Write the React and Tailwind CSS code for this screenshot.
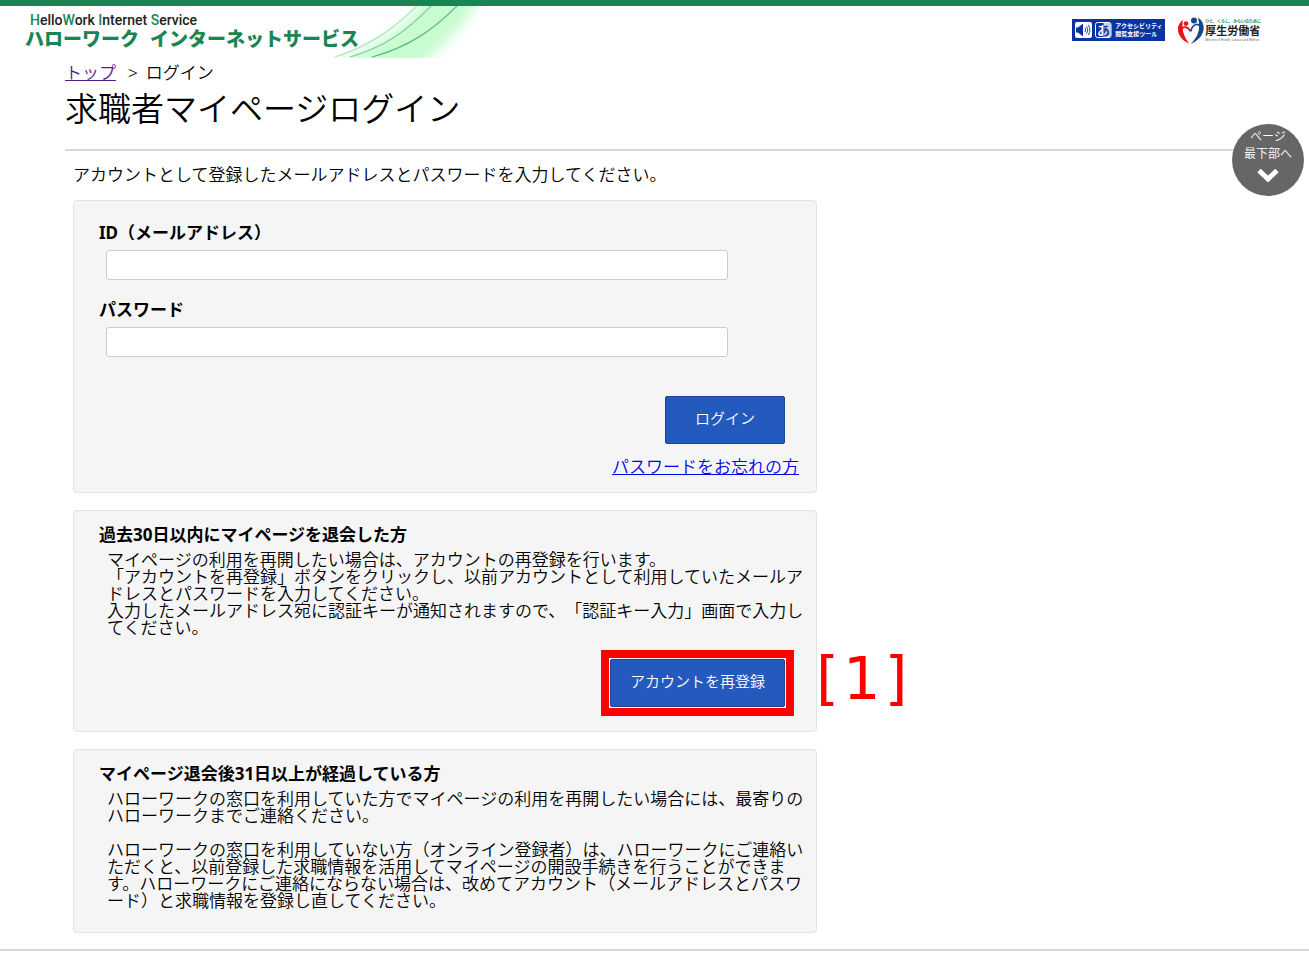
import React, { useState } from 'react';

const font = "font-['Noto_Sans','Noto_Sans_CJK_JP',sans-serif]";

function SiteLogo() {
  return (
    <a href="#" className="relative block h-[52px] w-[490px] pl-[25px] pt-[6px]">
      <svg className="absolute left-[325px] top-0" width="165" height="52" viewBox="0 0 165 52" aria-hidden="true">
        <defs>
          <filter id="soft" x="-20%" y="-20%" width="140%" height="140%">
            <feGaussianBlur stdDeviation="6" />
          </filter>
        </defs>
        <path d="M0 60 C40 48 78 24 104 -10 L158 -10 C136 22 116 44 94 60 Z" fill="#c8fbd0" filter="url(#soft)" />
        <g fill="none" strokeWidth="1.2">
          <path d="M10 51 C42 41 66 25 92 0" stroke="#b0e6c2" />
          <path d="M25 51 C60 41 82 25 107 -1" stroke="#7fcb9f" />
          <path d="M47 51 C84 41 108 24 133 -1" stroke="#5db98a" />
        </g>
      </svg>
      <div className="relative pl-[5px] text-[14px] leading-[16px] font-medium text-[#222] font-['Roboto','Noto_Sans_CJK_JP',sans-serif]">
        <span className="text-[#1a8553]">H</span>ello<span className="text-[#1a8553]">W</span>ork{' '}
        <span className="text-[#1a8553]">I</span>nternet <span className="text-[#1a8553]">S</span>ervice
      </div>
      <div className="relative flex gap-[11px] text-[19px] leading-[22px] font-black text-[#1a8553]">
        <span>ハローワーク</span>
        <span>インターネットサービス</span>
      </div>
    </a>
  );
}

function AccessibilityTool() {
  return (
    <a href="#" className="flex h-[22px] w-[93px] items-center gap-[3px] bg-[#0b33a0] pl-[3px] text-white">
      <svg width="37" height="18" viewBox="0 0 37 18" className="shrink-0" aria-hidden="true">
        <defs>
          <linearGradient id="half" gradientUnits="userSpaceOnUse" x1="28" y1="0" x2="29" y2="0">
            <stop offset="0" stopColor="#fff" />
            <stop offset="1" stopColor="#0b33a0" />
          </linearGradient>
        </defs>
        <rect x="0" y="1" width="17" height="16" rx="2" fill="#fff" />
        <path d="M1 6.5 H3 L8 2.5 V15.5 L3 11.5 H1 Z" fill="#0b33a0" />
        <g fill="none" stroke="#0b33a0" strokeWidth="0.9">
          <path d="M10 7 Q11.4 9 10 11" />
          <path d="M11.6 5.4 Q14 9 11.6 12.6" />
          <path d="M13.3 4 Q16.6 9 13.3 14" />
        </g>
        <rect x="20.5" y="1.5" width="15.5" height="15" rx="2" fill="#0b33a0" stroke="#fff" />
        <path d="M28.5 2 H34 Q36 2 36 4 V14 Q36 16 34 16 H28.5 Z" fill="#c9d3ee" />
        <text x="22" y="14" fontSize="13" fontWeight="700" fill="url(#half)">あ</text>
      </svg>
      <span className="text-[6px] leading-[8px] font-bold whitespace-nowrap">
        アクセシビリティ
        <br />
        閲覧支援ツール
      </span>
    </a>
  );
}

function MinistryLogo() {
  return (
    <a href="#" className="flex items-center gap-px">
      <svg width="26" height="28" viewBox="0 0 26 28" aria-hidden="true">
        <path d="M5 4 C-3 9 -2 22 11 27.4 C5.5 20 3.4 13 5 4 Z" fill="#e5161d" />
        <path d="M3.4 14 C5 9.4 10 10.6 12.4 15.4" fill="none" stroke="#e5161d" strokeWidth="1.7" />
        <circle cx="8" cy="7.6" r="2.4" fill="#e5161d" />
        <path d="M20 1.6 C29 7 28 22 12.4 28 C21 20 22.6 12 20 1.6 Z" fill="#17458f" />
        <path d="M22.6 11 C20 6.6 14.4 8 12.8 15.4" fill="none" stroke="#17458f" strokeWidth="1.7" />
        <circle cx="16" cy="4.4" r="3" fill="#17458f" />
      </svg>
      <span className="flex flex-col whitespace-nowrap">
        <span className="text-[4px] leading-[5px] font-bold text-[#1a8553]">ひと、くらし、みらいのために</span>
        <span className="text-[11px] leading-[14px] font-bold text-[#222]">厚生労働省</span>
        <span className="text-[3px] leading-[4px] font-normal text-[#666]">Ministry of Health, Labour and Welfare</span>
      </span>
    </a>
  );
}

function Card({ children, className }) {
  return (
    <section className={`rounded-[4px] border border-[#e3e3e3] bg-[#f5f5f5] pl-[25px] pr-2 ${className}`}>
      {children}
    </section>
  );
}

function Field({ id, label, type, value, onChange }) {
  return (
    <div>
      <label htmlFor={id} className="block leading-[24px] font-bold">
        {label}
      </label>
      <input
        id={id}
        type={type}
        value={value}
        onChange={(e) => onChange(e.target.value)}
        className="ml-[7px] mt-[5px] block h-[30px] w-[622px] max-w-full rounded-[3px] border border-[#ccc] bg-white px-2"
      />
    </div>
  );
}

function Button({ children, type = 'button' }) {
  return (
    <button
      type={type}
      className="h-[48px] min-w-[120px] rounded-[2px] border border-[#1b4694] bg-[#2459bd] px-[19px] pb-[3px] text-[15px] text-white"
    >
      {children}
    </button>
  );
}

export default function App() {
  const [mail, setMail] = useState('');
  const [password, setPassword] = useState('');

  return (
    <div className={`${font} relative bg-white text-[17px] font-[350] text-black [text-spacing-trim:space-all]`}>
      <header className="flex items-start justify-between border-t-[6px] border-[#1a8553] pr-[48px]">
        <SiteLogo />
        <div className="flex items-center gap-[13px] pt-[10px]">
          <AccessibilityTool />
          <MinistryLogo />
        </div>
      </header>

      <main className="px-[65px] pb-4">
        <nav className="flex pt-[3px] leading-[24px]">
          <a href="#" className="text-[#551a8b] underline">
            トップ
          </a>
          <span className="pl-3 pr-2">&gt;</span>
          <span>ログイン</span>
        </nav>
        <h1 className="border-b-2 border-[#d8d8d8] pb-4 text-[33px] leading-[48px]">求職者マイページログイン</h1>

        <div className="max-w-[752px] pl-2">
          <p className="py-[10px] leading-[28px]">
            アカウントとして登録したメールアドレスとパスワードを入力してください。
          </p>

          <div className="mt-px flex flex-col gap-[17px]">
            <Card className="pb-[13px] pt-5">
              <form onSubmit={(e) => e.preventDefault()}>
                <div className="flex flex-col gap-[18px]">
                  <Field id="mail" label="ID（メールアドレス）" type="text" value={mail} onChange={setMail} />
                  <Field id="password" label="パスワード" type="password" value={password} onChange={setPassword} />
                </div>
                <div className="mt-[39px] flex justify-end pr-[23px]">
                  <Button type="submit">ログイン</Button>
                </div>
                <div className="mt-[11px] flex justify-end pr-[9px] leading-[24px]">
                  <a href="#" className="text-[#0000ee] underline">
                    パスワードをお忘れの方
                  </a>
                </div>
              </form>
            </Card>

            <Card className="pb-6 pt-3">
              <h2 className="leading-[24px] font-bold">過去30日以内にマイページを退会した方</h2>
              <p className="mt-1 pl-2 leading-[17px] [line-break:loose]">
                マイページの利用を再開したい場合は、アカウントの再登録を行います。
                <br />
                「アカウントを再登録」ボタンをクリックし、以前アカウントとして利用していたメールアドレスとパスワードを入力してください。
                <br />
                入力したメールアドレス宛に認証キーが通知されますので、「認証キー入力」画面で入力してください。
              </p>
              <div className="mt-[23px] flex justify-end pr-[23px]">
                <div className="relative">
                  <Button>アカウントを再登録</Button>
                  <div className="pointer-events-none absolute -inset-[9px] border-8 border-[#ff0000]" />
                  <div className="pointer-events-none absolute -top-4 left-full ml-[31px] flex gap-1 font-['DejaVu_Sans',sans-serif] text-[59px] leading-[72px] font-normal text-[#ff0000]">
                    <span>[</span>
                    <span>1</span>
                    <span>]</span>
                  </div>
                </div>
              </div>
            </Card>

            <Card className="pb-[23px] pt-3">
              <h2 className="leading-[24px] font-bold">マイページ退会後31日以上が経過している方</h2>
              <p className="mt-1 pl-2 leading-[17px] [line-break:loose]">
                ハローワークの窓口を利用していた方でマイページの利用を再開したい場合には、最寄りのハローワークまでご連絡ください。
                <br />
                <br />
                ハローワークの窓口を利用していない方（オンライン登録者）は、ハローワークにご連絡いただくと、以前登録した求職情報を活用してマイページの開設手続きを行うことができます。ハローワークにご連絡にならない場合は、改めてアカウント（メールアドレスとパスワード）と求職情報を登録し直してください。
              </p>
            </Card>
          </div>
        </div>
      </main>
      <footer className="border-t-2 border-[#d8d8d8] pb-[14px]" />

      <button
        type="button"
        className="absolute right-[5px] top-[124px] flex size-[72px] flex-col items-center rounded-full bg-[#666] pt-1 text-[12px] leading-[17px] text-white"
      >
        <span>ページ</span>
        <span>最下部へ</span>
        <svg width="22" height="14" viewBox="0 0 22 14" className="mt-[6px]" aria-hidden="true">
          <path d="M2 2.5 L11 11 L20 2.5" fill="none" stroke="#fff" strokeWidth="5" />
        </svg>
      </button>
    </div>
  );
}
